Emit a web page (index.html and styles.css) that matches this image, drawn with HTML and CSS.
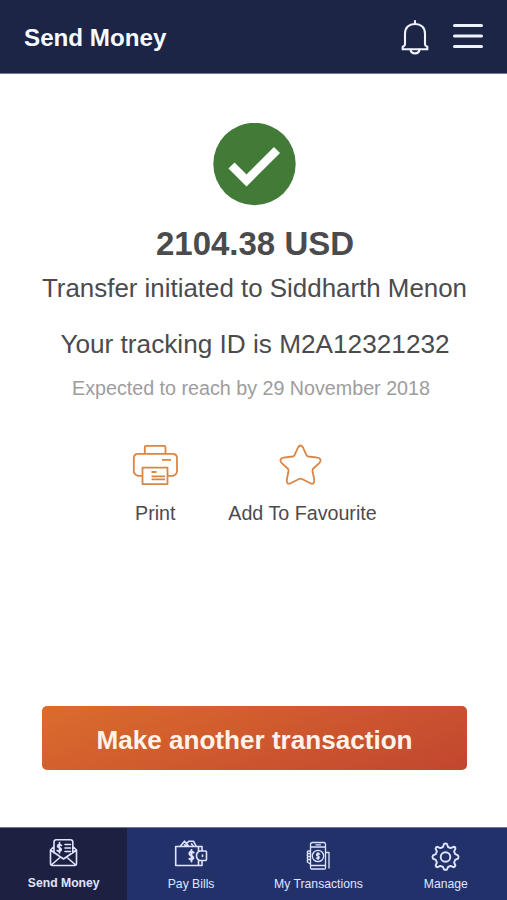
FILE: index.html
```html
<!DOCTYPE html>
<html lang="en">
<head>
    <meta charset="UTF-8">
    <meta name="viewport" content="width=device-width, initial-scale=1.0">
    <title>Send Money</title>
    <link rel="stylesheet" href="styles.css">
</head>
<body>

<header class="topbar">
    <h1>Send Money</h1>
    <svg class="bell" width="28" height="36" viewBox="0 0 28 36">
        <path d="M14 2v3M4 25.500V14.500C4 8.800 8 5 14 5S24 8.800 24 14.500V25.500c0 1 .6 1.500 2.300 2.300v2.500H1.700v-2.500c1.700-.8 2.300-1.300 2.300-2.300z"/>
        <path d="M9.500 30.500c.3 2.500 2 3.900 4.500 3.900s4.200-1.400 4.500-3.900"/>
    </svg>
    <svg class="menu" width="32" height="30" viewBox="0 0 32 30">
        <path d="M2.500 3.500h27M2.500 14h27M2.500 24.500h27"/>
    </svg>
</header>

<main class="content">
    <svg class="success" width="83" height="83" viewBox="0 0 83 83">
        <circle cx="41.500" cy="41" r="41.200" fill="#427a37"/>
        <path d="M18.500 42.500L33.500 57.500L64 27" fill="none" stroke="#fff" stroke-width="8.500"/>
    </svg>
    <p class="amount">2104.38 USD</p>
    <p class="line">Transfer initiated to Siddharth Menon</p>
    <p class="line tracking">Your tracking ID is M2A12321232</p>
    <p class="expected">Expected to reach by 29 November 2018</p>

    <div class="actions">
        <div class="action">
            <svg width="46" height="42" viewBox="0 0 46 42">
                <path d="M12.800 9.800V3.300Q12.800 1.800 14.300 1.800H32Q33.500 1.800 33.500 3.300V9.800M10.500 31.800H6Q1.800 30.800 1.800 26.800V14.300Q1.800 9.800 6.300 9.800H40.500Q45 9.800 45 14.300V26.800Q45 30.800 41 31.800H35.500M10.500 23.600H35.500V40.100H10.500zM30 15.800H39M19.500 28H24.500M19.500 32.300H33M19.500 35.300H33"/>
            </svg>
            <span>Print</span>
        </div>
        <div class="action">
            <svg class="star" width="46" height="42" viewBox="0 0 46 42">
                <path d="M20 3.500Q22.500-.5 25 3.500L28.300 10.800Q28.900 12.200 30.400 12.500L39.500 13.700Q44.500 15 41.500 18.800L35.300 24.500Q34.300 25.500 34.500 27L36.300 36Q36.500 40.800 32.500 39.300L24.500 35.200Q22.500 34.200 20.500 35.200L12.500 39.300Q8.500 40.800 8.800 36L10.500 27Q10.700 25.500 9.700 24.500L3.500 18.800Q.5 15 5.500 13.700L14.600 12.500Q16.100 12.200 16.700 10.800z"/>
            </svg>
            <span>Add To Favourite</span>
        </div>
    </div>

    <button class="primary">Make another transaction</button>
</main>

<nav class="tabs">
    <a class="tab active">
        <svg width="34" height="30" viewBox="0 0 34 30">
            <path d="M7 15V4Q7 1.700 9.300 1.700H23.500Q25.800 1.700 25.800 4V15M7 8.500L3.500 12V25.500Q3.500 27.500 5.500 27.500H27.500Q29.500 27.500 29.500 25.500V12L25.800 8.500M3.500 12L16.500 21L29.500 12M4.300 27L13.500 19M28.700 27L19.500 19"/>
            <path d="M18 6.500H23.500M18 10H23.500M18 13.500H23.500"/>
            <path d="M14.500 7.500Q12.300 5.500 10.800 7.300C9.300 10.500 15 9.200 14.200 12Q12.700 14.300 10.200 12.500M12.500 4.500V15"/>
        </svg>
        <span>Send Money</span>
    </a>
    <a class="tab">
        <svg width="34" height="30" viewBox="0 0 34 30">
            <path d="M28 11V6.500H1.700V25.500H28V20.500M24.500 6.500V11M24.500 20.500V25.500M31.500 11H26Q22.500 12 22.500 15.700T26 20.500H31.500Q32.500 20.500 32.500 19.500V12Q32.500 11 31.500 11zM28.500 15v1.500"/>
            <path d="M6.500 6L10.500 1.200L14.500 6M12.500 3.500L15 1.200H19.500L22 6M10.500 4.800L12.500 6M17.500 3.800L19 6"/>
            <path class="dollar" d="M19.700 12.700Q17.500 10.500 15.700 12.300C13.700 16 20 15 19.300 18.500Q17.500 20.700 15.300 18.800M17.500 10V21.500"/>
        </svg>
        <span>Pay Bills</span>
    </a>
    <a class="tab">
        <svg width="34" height="30" viewBox="0 0 34 30">
            <path class="phone" d="M9.500 27V4.500Q9.500 2.500 11.500 2.500H23Q24.500 2.500 24.500 4.500V28Q24.500 29 23.500 29H10.500Q9.500 29 9.500 27zM9.500 7H24.500M9.500 25.500H24.500M15 4.800H19.500M9.500 11H7Q5.500 12 7 13.500H9.500M7 13.500Q5.500 15 7 16.500H9.500M7 16.500Q5.500 18 7 19.500H9.500M7 19.500Q5.500 21 7 22.500L9.500 24M24.500 12.500H28V28"/>
            <circle class="phone disc" cx="17" cy="16" r="5.700"/>
            <path class="phone" d="M18.700 14.300Q17 12.700 15.700 14C14.400 16.300 19.200 15.600 18.200 18Q17 19.300 15.400 18M17 12.300V19.700"/>
        </svg>
        <span>My Transactions</span>
    </a>
    <a class="tab">
        <svg width="34" height="30" viewBox="0 0 34 30">
            <path class="gear" d="M15 4Q16.500 2.800 18 4L19 7L21.700 8.100L24.500 6.800Q26.500 7 26.400 8.700L25.100 11.500L26.200 14.200L29 15.300Q30 17 29 18.700L26.200 19.800L25.100 22.500L26.400 25.300Q26 27.200 24.500 27.200L21.700 25.900L19 27L18 29.500Q16.500 30 15 29.500L14 27L11.300 25.900L8.500 27.200Q6.800 27 6.600 25.300L7.900 22.500L6.800 19.800L4 18.700Q3 17 4 15.300L6.800 14.200L7.900 11.500L6.600 8.700Q6.800 7 8.500 6.800L11.300 8.100L14 7z"/>
            <circle class="gear" cx="16.500" cy="17" r="4.800"/>
        </svg>
        <span>Manage</span>
    </a>
</nav>

</body>
</html>
```

FILE: styles.css
```css
* {
    box-sizing: border-box;
}
body {
    margin: 0;
    height: 900px;
    display: flex;
    flex-direction: column;
    font-family: "Liberation Sans", Arial, sans-serif;
    background-color: #fff;
    color: #4b4b4d;
    overflow: hidden;
}
p, h1 {
    margin: 0;
    white-space: nowrap;
}
.topbar {
    height: 74px;
    padding: 0 23px 0 24px;
    display: flex;
    align-items: center;
    background-color: #1d2547;
    border-bottom: 1px solid #747892;
    color: #f8faff;
}
.topbar h1 {
    flex: 1;
    font-size: 24.2px;
    line-height: 30px;
    padding-top: 2px;
}
.topbar svg {
    fill: none;
    stroke: #eff3ff;
    stroke-linecap: round;
}
.bell {
    stroke-width: 2.1;
}
.menu {
    margin-left: 23px;
    stroke-width: 3;
}
.content {
    flex: 1;
    display: flex;
    flex-direction: column;
    align-items: center;
    padding-top: 49px;
    padding-left: 2px;
}
.success {
    display: block;
}
.amount {
    font-size: 33px;
    line-height: 38px;
    font-weight: bold;
    margin-top: 19px;
    margin-left: 1px;
}
.line {
    font-size: 25.9px;
    line-height: 30px;
    margin-top: 10px;
}
.tracking {
    font-size: 26.2px;
    margin-top: 26px;
    margin-left: 1px;
}
.expected {
    font-size: 19.7px;
    line-height: 24px;
    margin-top: 17px;
    margin-right: 7px;
    color: #9d9d9d;
}
.actions {
    display: flex;
    gap: 50px;
    margin-top: 44px;
}
.action {
    display: flex;
    flex-direction: column;
    align-items: center;
    font-size: 19.7px;
    line-height: 24px;
    gap: 15px;
}
.action svg {
    fill: none;
    stroke: #d98546;
    stroke-width: 1.8;
    stroke-linejoin: round;
    overflow: visible;
}
.action .star {
    margin-right: 2px;
}
.primary {
    width: 425px;
    height: 64px;
    margin-top: auto;
    margin-bottom: 57px;
    padding: 4px 0 0;
    border: none;
    border-radius: 5px;
    background: linear-gradient(160deg, #db6c2c, #c24630);
    color: #fff3e9;
    font-family: inherit;
    font-size: 26.1px;
    font-weight: bold;
}
.tabs {
    height: 73px;
    display: grid;
    grid-template-columns: repeat(4, 127.4px);
    border-top: 1px solid #6f7596;
    background-color: #23316b;
}
.tab {
    display: flex;
    flex-direction: column;
    align-items: center;
    gap: 7px;
    padding-top: 12px;
    color: #dfe5ff;
    font-size: 12.2px;
    line-height: 14px;
}
.tab.active {
    padding-top: 10px;
    gap: 8px;
    background-color: #1e2042;
    font-weight: bold;
}
.tab svg {
    fill: none;
    stroke: #dfe5ff;
    stroke-width: 1.6;
    stroke-linejoin: round;
    stroke-linecap: round;
    overflow: visible;
}
.tab .phone {
    stroke-width: 1.3;
}
.tab .gear,
.tab .dollar {
    stroke-width: 1.9;
}
.tab .disc {
    fill: #23316b;
}
```
